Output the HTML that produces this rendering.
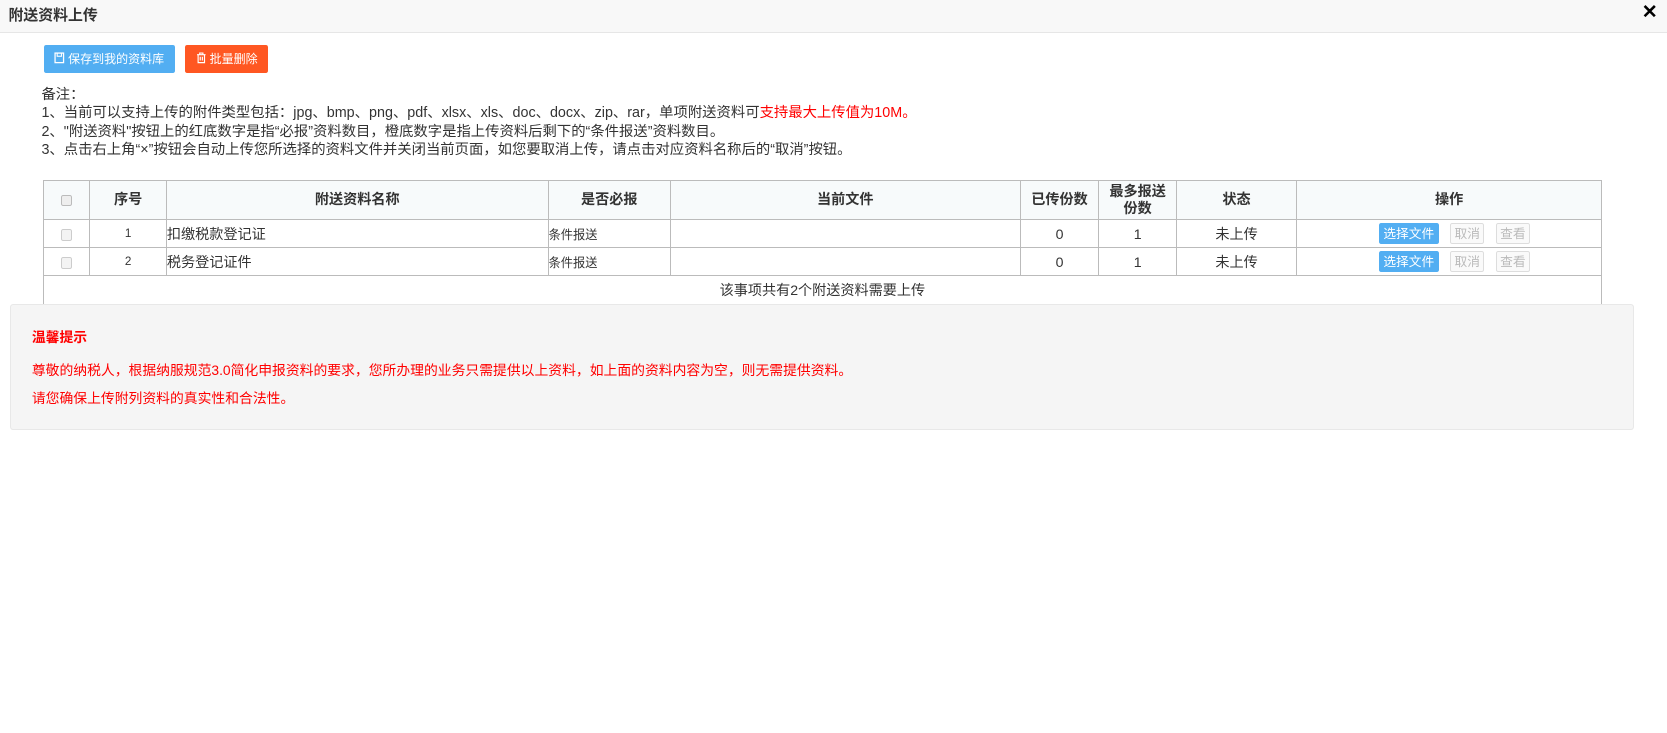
<!DOCTYPE html>
<html><head><meta charset="utf-8"><style>
*{margin:0;padding:0;box-sizing:border-box}
body{width:1667px;height:732px;background:#fff;overflow:hidden}
.w{zoom:1.0633;width:1568px;height:689px;position:relative;font-family:"Liberation Sans","Noto Sans CJK SC",sans-serif;color:#333;font-size:13px}
.hd{position:absolute;left:0;top:0;width:1568px;height:31px;background:#f8f8f8;border-bottom:1px solid #e6e6e6}
.hd span{position:absolute;left:8px;top:4px;font-size:14px;font-weight:bold;color:#333}
.x{position:absolute;left:1544px;top:0px;font-size:18px;font-weight:bold;color:#000}
.btn{position:absolute;top:42px;height:27px;color:#fff;font-size:11.3px;line-height:27px;border-radius:2px;padding-left:10px;white-space:nowrap}
.note{position:absolute;left:39px;top:81px;font-size:13.5px;line-height:17.2px;color:#333;white-space:nowrap}
.red{color:#f00}
table{position:absolute;left:40px;top:169px;border-collapse:collapse;width:1466px;table-layout:fixed}
td,th{border:1px solid #bbb;font-size:13.3px;text-align:center;color:#333;white-space:nowrap}
th{background:#f7fafb;height:37px;font-weight:bold;line-height:16px}
td{height:26.5px}
.l{text-align:left}
.cb{display:inline-block;width:11px;height:11px;border:1px solid #bbb;border-radius:2px;background:#eee;vertical-align:middle}
.ob{display:inline-block;height:20px;line-height:18px;font-size:12px;border-radius:2px;vertical-align:middle;padding:0 3px}
.tip{position:absolute;left:9px;top:286px;width:1528px;height:118px;background:#f5f5f5;border:1px solid #e8e8e8;border-radius:3px;color:#f00;font-size:13px;white-space:nowrap}
</style></head><body><div class="w">
<div class="hd"><span>附送资料上传</span><div class="x">✕</div></div>
<div class="btn" style="left:41px;width:124px;background:#52aef2">
<svg width="10" height="11" style="vertical-align:-1px" viewBox="0 0 10 11"><rect x="1" y="1" width="8" height="9" fill="none" stroke="#fff" stroke-width="1.2"/><rect x="3" y="1" width="4" height="3" fill="none" stroke="#fff"/></svg> 保存到我的资料库</div>
<div class="btn" style="left:174px;width:78px;background:#ff5722">
<svg width="10" height="11" style="vertical-align:-1px" viewBox="0 0 10 11"><path d="M1 2.5H9M3.5 2.5V1H6.5V2.5M2 2.5V10H8V2.5M4 4.5V8M6 4.5V8" fill="none" stroke="#fff" stroke-width="1.1"/></svg> 批量删除</div>
<div class="note">备注：<br>1、当前可以支持上传的附件类型包括：jpg、bmp、png、pdf、xlsx、xls、doc、docx、zip、rar，单项附送资料可<span class="red">支持最大上传值为10M。</span><br>2、"附送资料"按钮上的红底数字是指“必报”资料数目，橙底数字是指上传资料后剩下的“条件报送”资料数目。<br>3、点击右上角“×”按钮会自动上传您所选择的资料文件并关闭当前页面，如您要取消上传，请点击对应资料名称后的“取消”按钮。</div>
<table>
<colgroup><col style="width:44px"><col style="width:72px"><col style="width:359px"><col style="width:115px"><col style="width:329px"><col style="width:74px"><col style="width:73px"><col style="width:113px"><col style="width:287px"></colgroup>
<tr><th><span class="cb"></span></th><th>序号</th><th>附送资料名称</th><th>是否必报</th><th>当前文件</th><th>已传份数</th><th>最多报送<br>份数</th><th>状态</th><th>操作</th></tr>
<tr><td><span class="cb" style="background:#f3f3f3;border-color:#ccc"></span></td><td style="font-size:11px">1</td><td class="l">扣缴税款登记证</td><td class="l" style="font-size:11.5px">条件报送</td><td></td><td>0</td><td>1</td><td>未上传</td><td style="padding-left:10px"><span class="ob" style="background:#52aef2;color:#fff;border:1px solid #52aef2">选择文件</span>&nbsp;&nbsp;&nbsp;<span class="ob" style="border:1px solid #ddd;color:#bbb;background:#fafafa">取消</span>&nbsp;&nbsp;&nbsp;<span class="ob" style="border:1px solid #ddd;color:#bbb;background:#fafafa">查看</span></td></tr>
<tr><td><span class="cb" style="background:#f3f3f3;border-color:#ccc"></span></td><td style="font-size:11px">2</td><td class="l">税务登记证件</td><td class="l" style="font-size:11.5px">条件报送</td><td></td><td>0</td><td>1</td><td>未上传</td><td style="padding-left:10px"><span class="ob" style="background:#52aef2;color:#fff;border:1px solid #52aef2">选择文件</span>&nbsp;&nbsp;&nbsp;<span class="ob" style="border:1px solid #ddd;color:#bbb;background:#fafafa">取消</span>&nbsp;&nbsp;&nbsp;<span class="ob" style="border:1px solid #ddd;color:#bbb;background:#fafafa">查看</span></td></tr>
<tr><td colspan="9">该事项共有2个附送资料需要上传</td></tr>
</table>
<div class="tip">
<div style="position:absolute;left:20px;top:20px;font-weight:bold">温馨提示</div>
<div style="position:absolute;left:20px;top:51px">尊敬的纳税人，根据纳服规范3.0简化申报资料的要求，您所办理的业务只需提供以上资料，如上面的资料内容为空，则无需提供资料。</div>
<div style="position:absolute;left:20px;top:77px">请您确保上传附列资料的真实性和合法性。</div>
</div>
</div></body></html>
